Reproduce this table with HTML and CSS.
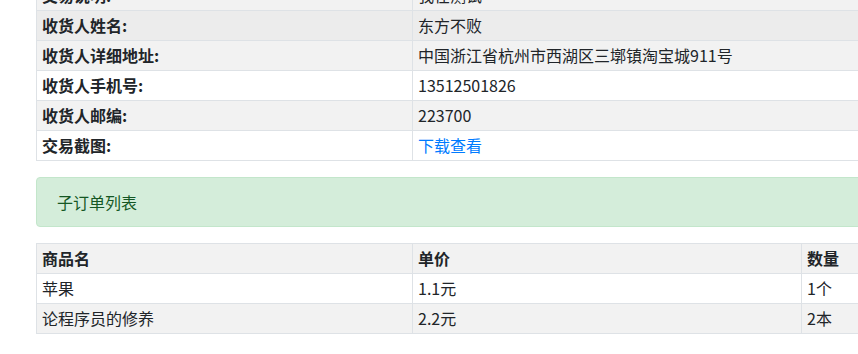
FILE: index.html
```html
<!DOCTYPE html>
<html lang="zh-CN">
<head>
<meta charset="utf-8">
<title>订单详情</title>
<link rel="stylesheet" href="styles.css">
</head>
<body>
<div class="page">
  <table class="tbl info">
    <colgroup><col class="c-label"><col></colgroup>
    <tbody>
      <tr class="stripe"><th>交易说明:</th><td>我在测试</td></tr>
      <tr class="hover"><th>收货人姓名:</th><td>东方不败</td></tr>
      <tr class="stripe"><th>收货人详细地址:</th><td>中国浙江省杭州市西湖区三墎镇淘宝城911号</td></tr>
      <tr><th>收货人手机号:</th><td>13512501826</td></tr>
      <tr class="stripe"><th>收货人邮编:</th><td>223700</td></tr>
      <tr><th>交易截图:</th><td><a class="link" href="#">下载查看</a></td></tr>
    </tbody>
  </table>

  <div class="alert">子订单列表</div>

  <table class="tbl items">
    <colgroup><col class="c-label"><col class="c-price"><col></colgroup>
    <tbody>
      <tr class="stripe"><th>商品名</th><th>单价</th><th>数量</th></tr>
      <tr><td>苹果</td><td>1.1元</td><td>1个</td></tr>
      <tr class="stripe"><td>论程序员的修养</td><td>2.2元</td><td>2本</td></tr>
    </tbody>
  </table>
</div>
</body>
</html>
```

FILE: styles.css
```css
html, body {
  margin: 0;
  padding: 0;
  background: #fff;
  overflow: hidden;
}
body {
  font-family: "Noto Sans CJK SC", "Noto Sans", sans-serif;
  font-size: 16px;
  color: #212529;
}
.page {
  width: 900px;
  padding-left: 36px;
  margin-top: -20px;
}
.tbl {
  width: 900px;
  border-collapse: collapse;
  table-layout: fixed;
}
.tbl th, .tbl td {
  border: 1px solid #dee2e6;
  padding: 3px 5px;
  line-height: 23px;
  height: 23px;
  text-align: left;
  vertical-align: middle;
  white-space: nowrap;
  overflow: hidden;
}
.tbl th { font-weight: 700; }
.tbl td { font-weight: 400; }
.c-label { width: 376px; }
.c-price { width: 389px; }
.stripe { background: #f2f2f2; }
.hover { background: #ececec; }
.link { color: #007bff; text-decoration: none; }
.alert {
  margin: 16px 0;
  padding: 12px 20px;
  line-height: 24px;
  background: #d4edda;
  border: 1px solid #c3e6cb;
  border-radius: 4px;
  color: #155724;
  width: 900px;
  box-sizing: border-box;
}
```
